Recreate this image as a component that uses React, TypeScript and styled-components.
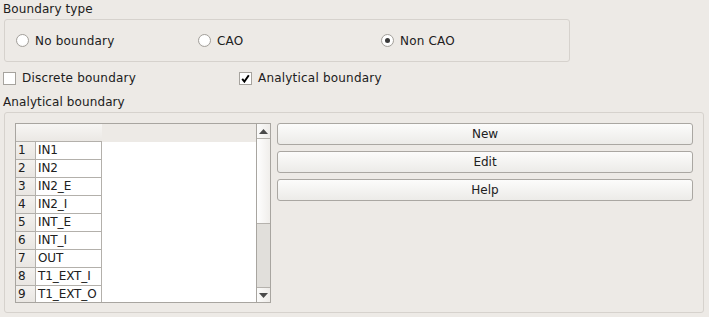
import React from 'react';
import styled, { createGlobalStyle } from 'styled-components';

const GlobalStyle = createGlobalStyle`
  html, body {
    margin: 0;
    padding: 0;
    background: #edeae6;
  }
`;

const Window = styled.div`
  width: 709px;
  height: 317px;
  overflow: hidden;
  display: flex;
  flex-direction: column;
  background: #edeae6;
  color: #202020;
  font-family: 'DejaVu Sans', 'Liberation Sans', sans-serif;
  font-size: 12px;
`;

const Caption = styled.div<{ $gap: number }>`
  margin-top: ${(p) => p.$gap}px;
  padding-left: 3px;
  height: 14px;
  line-height: 14px;
  white-space: nowrap;
  letter-spacing: 0.1px;
`;

const GroupBox = styled.div<{ $w: number; $h: number }>`
  box-sizing: border-box;
  margin: 3px 0 0 4px;
  width: ${(p) => p.$w}px;
  height: ${(p) => p.$h}px;
  border: 1px solid #d6d2cd;
  border-radius: 3px;
`;

const RadioRow = styled.div`
  display: grid;
  grid-template-columns: 182px 183px auto;
  align-items: center;
  height: 100%;
  padding-left: 11px;
`;

const Option = styled.label`
  display: flex;
  align-items: center;
  gap: 6px;
  white-space: nowrap;
  line-height: 14px;
  letter-spacing: 0.2px;
`;

const RadioCircle = styled.span<{ $on?: boolean }>`
  box-sizing: border-box;
  width: 13px;
  height: 13px;
  border-radius: 50%;
  border: 1px solid #a3a09b;
  background: radial-gradient(circle at 50% 40%, #ffffff 55%, #eeece9 100%);
  display: flex;
  align-items: center;
  justify-content: center;

  &::after {
    content: '';
    display: ${(p) => (p.$on ? 'block' : 'none')};
    width: 5px;
    height: 5px;
    border-radius: 50%;
    background: #3a3a3a;
  }
`;

const CheckRow = styled.div`
  margin-top: 9px;
  height: 14px;
  display: grid;
  grid-template-columns: 236px auto;
  align-items: center;
  padding-left: 3px;
`;

const CheckBox = styled.span`
  box-sizing: border-box;
  width: 13px;
  height: 13px;
  border: 1px solid #a6a39e;
  background: #fff;
  display: flex;
  align-items: center;
  justify-content: center;
`;

const Panel = styled(GroupBox)`
  display: flex;
  align-items: flex-start;
  gap: 6px;
  padding: 10px;
`;

const Table = styled.div`
  box-sizing: border-box;
  width: 256px;
  height: 180px;
  border: 1px solid #a8a5a0;
  background: #fff;
  display: flex;
  overflow: hidden;
`;

const Grid = styled.div`
  flex: 1;
  display: flex;
  flex-direction: column;
  overflow: hidden;
`;

const HeaderRow = styled.div`
  display: flex;
  height: 18px;
  flex-shrink: 0;
  background: #edeae6;
`;

const HeaderSection = styled.div`
  box-sizing: border-box;
  width: 86px;
  border-bottom: 1px solid #b3b0ab;
  background: linear-gradient(#f7f6f4, #ebe8e4);
`;

const Row = styled.div`
  display: flex;
  height: 18px;
  flex-shrink: 0;
`;

const Cell = styled.div<{ $w: number; $head?: boolean }>`
  box-sizing: border-box;
  width: ${(p) => p.$w}px;
  padding-left: 2px;
  line-height: 17px;
  border-right: 1px solid #b3b0ab;
  border-bottom: 1px solid #b3b0ab;
  background: ${(p) => (p.$head ? 'linear-gradient(#f3f1ee, #e9e6e2)' : '#fff')};
  white-space: nowrap;
  overflow: hidden;
  letter-spacing: -0.1px;
`;

const ScrollBar = styled.div`
  box-sizing: border-box;
  width: 14px;
  border-left: 1px solid #a8a5a0;
  display: flex;
  flex-direction: column;
`;

const ArrowButton = styled.div<{ $down?: boolean }>`
  box-sizing: border-box;
  height: 15px;
  flex-shrink: 0;
  display: flex;
  align-items: center;
  justify-content: center;
  background: linear-gradient(to right, #fbfbfa, #eeece9);
  ${(p) => (p.$down ? 'border-top: 1px solid #b5b2ad;' : 'border-bottom: 1px solid #b5b2ad;')}
`;

const Handle = styled.div`
  box-sizing: border-box;
  height: 85px;
  flex-shrink: 0;
  border-bottom: 1px solid #b5b2ad;
  background: linear-gradient(to right, #fefefe, #f0eeeb);
`;

const Trough = styled.div`
  flex: 1;
  background: #e1dfdb;
`;

const Buttons = styled.div`
  width: 416px;
  display: flex;
  flex-direction: column;
  gap: 6px;
`;

const PushButton = styled.button`
  box-sizing: border-box;
  height: 22px;
  width: 100%;
  margin: 0;
  padding: 0;
  border: 1px solid #aaa7a2;
  border-radius: 3px;
  background: linear-gradient(#fcfcfb, #ecebe8);
  color: #202020;
  font-family: inherit;
  font-size: 12px;
  font-weight: 400;
  line-height: 20px;
`;

const Arrow = ({ down }: { down?: boolean }) => (
  <svg width="9" height="5" viewBox="0 0 9 5">
    <polygon points={down ? '0,0 9,0 4.5,5' : '0,5 9,5 4.5,0'} fill="#4a4a4a" />
  </svg>
);

const Tick = () => (
  <svg width="9" height="9" viewBox="0 0 9 9">
    <path d="M1.2 4.8 L3.4 7.6 L7.8 1.2" stroke="#000" strokeWidth="1.9" fill="none" />
  </svg>
);

const rows = ['IN1', 'IN2', 'IN2_E', 'IN2_I', 'INT_E', 'INT_I', 'OUT', 'T1_EXT_I', 'T1_EXT_O'];

export default function App() {
  return (
    <Window>
      <GlobalStyle />
      <Caption $gap={2}>Boundary type</Caption>
      <GroupBox $w={566} $h={43}>
        <RadioRow>
          <Option>
            <RadioCircle />
            No boundary
          </Option>
          <Option>
            <RadioCircle />
            CAO
          </Option>
          <Option>
            <RadioCircle $on />
            Non CAO
          </Option>
        </RadioRow>
      </GroupBox>
      <CheckRow>
        <Option>
          <CheckBox />
          Discrete boundary
        </Option>
        <Option>
          <CheckBox>
            <Tick />
          </CheckBox>
          Analytical boundary
        </Option>
      </CheckRow>
      <Caption $gap={10}>Analytical boundary</Caption>
      <Panel $w={700} $h={201}>
        <Table>
          <Grid>
            <HeaderRow>
              <HeaderSection />
            </HeaderRow>
            {rows.map((name, i) => (
              <Row key={name}>
                <Cell $w={20} $head>
                  {i + 1}
                </Cell>
                <Cell $w={66}>{name}</Cell>
              </Row>
            ))}
          </Grid>
          <ScrollBar>
            <ArrowButton>
              <Arrow />
            </ArrowButton>
            <Handle />
            <Trough />
            <ArrowButton $down>
              <Arrow down />
            </ArrowButton>
          </ScrollBar>
        </Table>
        <Buttons>
          <PushButton>New</PushButton>
          <PushButton>Edit</PushButton>
          <PushButton>Help</PushButton>
        </Buttons>
      </Panel>
    </Window>
  );
}
